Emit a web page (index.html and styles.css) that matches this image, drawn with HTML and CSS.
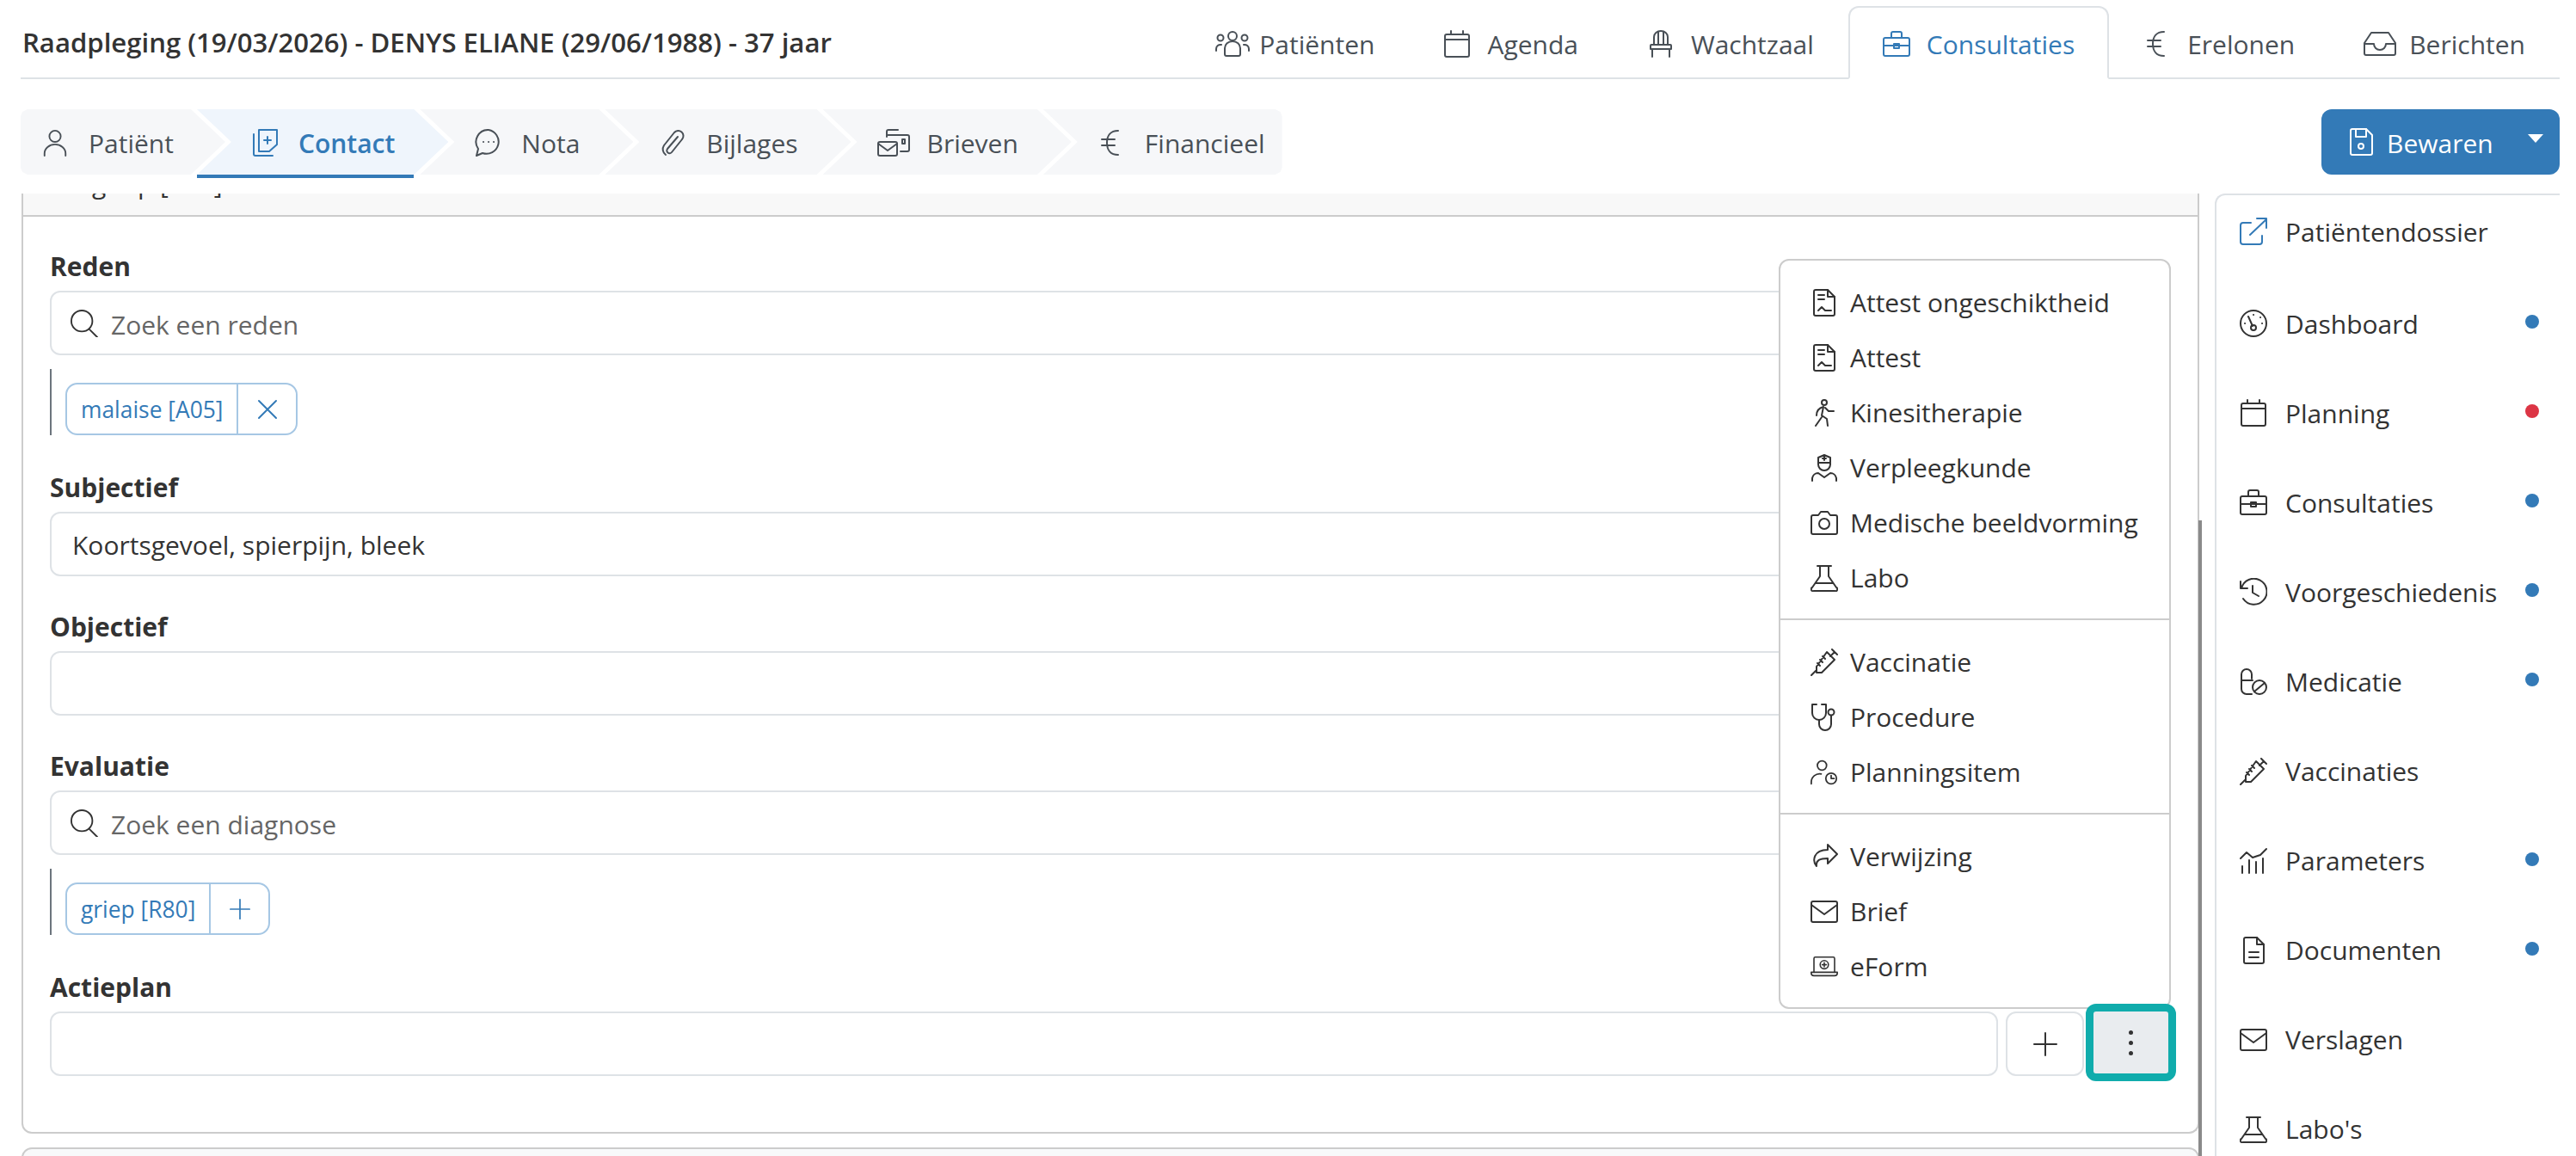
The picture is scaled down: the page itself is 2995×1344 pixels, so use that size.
FILE: index.html
```html
<!DOCTYPE html>
<html lang="nl">
<head>
  <meta charset="UTF-8">
  <title>Raadpleging</title>
  <link rel="stylesheet" href="styles.css">
</head>
<body>
  <!-- icon sprite -->
  <svg class="sprite" xmlns="http://www.w3.org/2000/svg">
    <symbol id="i-user" viewBox="0 0 32 34"><circle cx="16" cy="9" r="7"/><path d="M3 33v-3a13 11 0 0 1 26 0v3"/></symbol>
    <symbol id="i-contact" viewBox="0 0 32 32"><path d="M3 6v23a2 2 0 0 0 2 2h20"/><path d="M9 1h21v17l-9 8H9z"/><path d="M19 9v8M15 13h8"/></symbol>
    <symbol id="i-note" viewBox="0 0 32 32"><path d="M17 1a14 14 0 1 1-7 27l-7 3 2-8A14 14 0 0 1 17 1z"/><path d="M11 15h.1M17 15h.1M23 15h.1"/></symbol>
    <symbol id="i-clip" viewBox="0 0 32 32"><path d="M22 9L10 23a3 3 0 0 0 5 4L27 12a6 6 0 0 0-9-8L6 19a8 8 0 0 0 2 11"/></symbol>
    <symbol id="i-letters" viewBox="0 0 38 32"><path d="M11 9V3a2 2 0 0 1 2-2h11M11 7h24a2 2 0 0 1 2 2v15a2 2 0 0 1-2 2h-8"/><rect x="1" y="15" width="22" height="16" rx="2"/><path d="M1 17l11 8 11-8"/><rect x="29" y="12" width="3" height="5"/></symbol>
    <symbol id="i-euro" viewBox="0 0 32 32"><path d="M24 2c-9 0-13 6-13 14s4 14 13 14M5 12h15M5 19h15"/></symbol>
    <symbol id="i-people" viewBox="0 0 40 30"><circle cx="20" cy="6" r="5"/><circle cx="6" cy="8" r="3.5"/><circle cx="34" cy="8" r="3.5"/><path d="M11 27v-7a9 8 0 0 1 18 0v7a2 2 0 0 1-2 2H13a2 2 0 0 1-2-2z"/><path d="M1 23v-2a5 5 0 0 1 6-5M39 23v-2a5 5 0 0 0-6-5"/></symbol>
    <symbol id="i-calendar" viewBox="0 0 32 32"><rect x="2" y="5" width="28" height="26" rx="2"/><path d="M2 11h28M9 1v4M23 1v4"/></symbol>
    <symbol id="i-chair" viewBox="0 0 32 32"><path d="M8 17V8a8 7 0 0 1 16 0v9M13 17V2M19 17V2"/><path d="M5 17h22a1 1 0 0 1 1 1v4H4v-4a1 1 0 0 1 1-1zM6 22v9M26 22v9"/></symbol>
    <symbol id="i-case" viewBox="0 0 32 32"><rect x="1" y="9" width="30" height="21" rx="2"/><path d="M10 9V4a2 2 0 0 1 2-2h8a2 2 0 0 1 2 2v5M1 18h30"/><rect x="13" y="16" width="6" height="5"/></symbol>
    <symbol id="i-inbox" viewBox="0 0 38 32"><path d="M9 3h20l8 12v12a2 2 0 0 1-2 2H3a2 2 0 0 1-2-2V15zM1 16h11a7 7 0 0 0 14 0h11"/></symbol>
    <symbol id="i-save" viewBox="0 0 32 32"><path d="M6 1h16l7 7v21a2 2 0 0 1-2 2H6a2 2 0 0 1-2-2V3a2 2 0 0 1 2-2z"/><path d="M10 1v9h12V1"/><circle cx="16" cy="21" r="3"/></symbol>
    <symbol id="i-open" viewBox="0 0 32 32"><path d="M13 6H4a3 3 0 0 0-3 3v19a3 3 0 0 0 3 3h19a3 3 0 0 0 3-3v-7"/><path d="M12 20L31 2M20 1h11v11"/></symbol>
    <symbol id="i-gauge" viewBox="0 0 32 32"><circle cx="16" cy="16" r="15"/><path d="M10 8l5 11"/><circle cx="16" cy="21" r="3"/><path d="M16 6h.1M24 9h.1M26 16h.1M6 16h.1"/></symbol>
    <symbol id="i-history" viewBox="0 0 32 32"><path d="M1 4v8h8"/><path d="M2 12A15 15 0 1 1 4 24"/><path d="M15 9v8l7 4"/></symbol>
    <symbol id="i-pills" viewBox="0 0 32 32"><path d="M14 13V8A6 6 0 0 0 2 8v17a6 6 0 0 0 6 6h6M2 15h13"/><circle cx="23" cy="23" r="8"/><path d="M17 28l12-10"/></symbol>
    <symbol id="i-syringe" viewBox="0 0 32 32"><path d="M25 1l6 6M28 4l-5 5M19 4l9 9-15 15H7v-7zM1 31l6-6M14 9l3 3M11 13l3 3M8 17l3 3"/></symbol>
    <symbol id="i-chart" viewBox="0 0 32 32"><path d="M1 13l7-7 7 6 9-3 7-7M3 30v-8M11 30V15M19 30V17M27 30V13"/></symbol>
    <symbol id="i-doc" viewBox="0 0 32 32"><path d="M7 1h13l8 8v20a2 2 0 0 1-2 2H7a2 2 0 0 1-2-2V3a2 2 0 0 1 2-2z"/><path d="M20 1v8h8M11 18h11M11 24h11"/></symbol>
    <symbol id="i-mail" viewBox="0 0 32 32"><rect x="1" y="4" width="30" height="24" rx="2"/><path d="M1 8l15 11L31 8"/></symbol>
    <symbol id="i-flask" viewBox="0 0 32 32"><path d="M8 2h16M11 2v12L2 27a2 2 0 0 0 2 4h24a2 2 0 0 0 2-4l-9-13V2M6 22h20"/></symbol>
    <symbol id="i-attest" viewBox="0 0 32 32"><path d="M6 1h14l8 8v20a2 2 0 0 1-2 2H6a2 2 0 0 1-2-2V3a2 2 0 0 1 2-2z"/><path d="M20 1v8h8M9 7h7M9 12h7M9 25l4-4 4 4h7"/></symbol>
    <symbol id="i-walk" viewBox="0 0 32 32"><circle cx="16" cy="4" r="3"/><path d="M15 9c-4 1-8 4-8 10M15 9l-2 10 6 4 1 8M17 10l4 4h6M13 21L6 31"/></symbol>
    <symbol id="i-nurse" viewBox="0 0 32 32"><path d="M9 4l7-3 7 3v6H9zM9 10v2a7 7 0 0 0 14 0v-2M16 3v4M14 5h4"/><path d="M2 31v-3a7 7 0 0 1 7-6l7 5 7-5a7 7 0 0 1 7 6v3"/></symbol>
    <symbol id="i-camera" viewBox="0 0 32 32"><path d="M3 7h6l3-4h8l3 4h6a2 2 0 0 1 2 2v18a2 2 0 0 1-2 2H3a2 2 0 0 1-2-2V9a2 2 0 0 1 2-2z"/><circle cx="16" cy="17" r="6"/></symbol>
    <symbol id="i-steth" viewBox="0 0 32 32"><path d="M7 1H2v10a8 8 0 0 0 16 0V1h-5"/><path d="M10 19v5a7 7 0 0 0 14 0V14"/><circle cx="24" cy="10" r="3.5"/></symbol>
    <symbol id="i-userclock" viewBox="0 0 36 32"><circle cx="15" cy="7" r="6"/><path d="M1 31v-2a11 11 0 0 1 13-11"/><circle cx="27" cy="24" r="7"/><path d="M27 20v4h4"/></symbol>
    <symbol id="i-forward" viewBox="0 0 32 32"><path d="M20 2l11 11-11 11v-6C11 18 6 20 7 27 2 21 3 8 20 8z"/></symbol>
    <symbol id="i-laptop" viewBox="0 0 40 32"><path d="M5 24V4a2 2 0 0 1 2-2h26a2 2 0 0 1 2 2v20"/><path d="M1 24h38v1a4 4 0 0 1-4 4H5a4 4 0 0 1-4-4z"/><circle cx="20" cy="13" r="6"/><path d="M20 10v6M17 13h6"/></symbol>
    <symbol id="i-search" viewBox="0 0 34 34"><circle cx="14" cy="14" r="13"/><path d="M23 24l10 10"/></symbol>
    <symbol id="i-close" viewBox="0 0 24 24"><path d="M2 2l20 20M22 2L2 22"/></symbol>
    <symbol id="i-plus" viewBox="0 0 28 28"><path d="M14 1v26M1 14h26"/></symbol>
  </svg>

  <div class="app">
    <!-- Top bar -->
    <header class="topbar">
      <div class="title">Raadpleging (19/03/2026) - DENYS ELIANE (29/06/1988) - 37 jaar</div>
      <nav class="tabs">
        <a class="tab"><svg class="ic ic-40"><use href="#i-people"/></svg>Patiënten</a>
        <a class="tab"><svg class="ic"><use href="#i-calendar"/></svg>Agenda</a>
        <a class="tab"><svg class="ic"><use href="#i-chair"/></svg>Wachtzaal</a>
        <a class="tab active"><svg class="ic"><use href="#i-case"/></svg>Consultaties</a>
        <a class="tab"><svg class="ic"><use href="#i-euro"/></svg>Erelonen</a>
        <a class="tab"><svg class="ic ic-38"><use href="#i-inbox"/></svg>Berichten</a>
      </nav>
    </header>

    <!-- Stepper + save -->
    <div class="toolbar">
      <div class="steps">
        <a class="step"><svg class="ic"><use href="#i-user"/></svg>Patiënt</a>
        <a class="step active"><svg class="ic"><use href="#i-contact"/></svg>Contact</a>
        <a class="step"><svg class="ic"><use href="#i-note"/></svg>Nota</a>
        <a class="step"><svg class="ic"><use href="#i-clip"/></svg>Bijlages</a>
        <a class="step"><svg class="ic ic-38"><use href="#i-letters"/></svg>Brieven</a>
        <a class="step"><svg class="ic"><use href="#i-euro"/></svg>Financieel</a>
      </div>
      <button class="save-btn">
        <svg class="ic"><use href="#i-save"/></svg>
        <span>Bewaren</span>
        <i class="caret"></i>
      </button>
    </div>

    <div class="main">
      <div class="content">
        <div class="card">
          <div class="strip"><div class="strip-text">griep [R80]</div></div>
          <div class="card-body">
            <div class="field with-tags">
              <label>Reden</label>
              <div class="search">
                <svg class="ic"><use href="#i-search"/></svg>
                <input type="text" placeholder="Zoek een reden">
              </div>
              <div class="tags">
                <span class="chip"><span class="chip-text">malaise [A05]</span><span class="chip-btn"><svg class="ic ic-s"><use href="#i-close"/></svg></span></span>
              </div>
            </div>
            <div class="field">
              <label>Subjectief</label>
              <input class="text-input" type="text" value="Koortsgevoel, spierpijn, bleek">
            </div>
            <div class="field">
              <label>Objectief</label>
              <input class="text-input" type="text">
            </div>
            <div class="field with-tags">
              <label>Evaluatie</label>
              <div class="search">
                <svg class="ic"><use href="#i-search"/></svg>
                <input type="text" placeholder="Zoek een diagnose">
              </div>
              <div class="tags">
                <span class="chip"><span class="chip-text">griep [R80]</span><span class="chip-btn"><svg class="ic ic-s"><use href="#i-plus"/></svg></span></span>
              </div>
            </div>
            <div class="field">
              <label>Actieplan</label>
              <div class="action-row">
                <input class="text-input" type="text">
                <button class="plus-btn"><svg class="ic ic-m"><use href="#i-plus"/></svg></button>
                <button class="more-btn"><i></i><i></i><i></i></button>
              </div>
            </div>
          </div>
        </div>
        <div class="card next"></div>
        <div class="scrollbar"></div>

        <!-- Dropdown of the ⋮ button -->
        <div class="menu">
          <div class="menu-group">
            <a class="menu-item"><svg class="ic"><use href="#i-attest"/></svg>Attest ongeschiktheid</a>
            <a class="menu-item"><svg class="ic"><use href="#i-attest"/></svg>Attest</a>
            <a class="menu-item"><svg class="ic"><use href="#i-walk"/></svg>Kinesitherapie</a>
            <a class="menu-item"><svg class="ic"><use href="#i-nurse"/></svg>Verpleegkunde</a>
            <a class="menu-item"><svg class="ic"><use href="#i-camera"/></svg>Medische beeldvorming</a>
            <a class="menu-item"><svg class="ic"><use href="#i-flask"/></svg>Labo</a>
          </div>
          <div class="menu-group">
            <a class="menu-item"><svg class="ic"><use href="#i-syringe"/></svg>Vaccinatie</a>
            <a class="menu-item"><svg class="ic"><use href="#i-steth"/></svg>Procedure</a>
            <a class="menu-item"><svg class="ic"><use href="#i-userclock"/></svg>Planningsitem</a>
          </div>
          <div class="menu-group">
            <a class="menu-item"><svg class="ic"><use href="#i-forward"/></svg>Verwijzing</a>
            <a class="menu-item"><svg class="ic"><use href="#i-mail"/></svg>Brief</a>
            <a class="menu-item"><svg class="ic"><use href="#i-laptop"/></svg>eForm</a>
          </div>
        </div>
      </div>

      <!-- Right side list -->
      <aside class="side">
        <a class="side-row first"><svg class="ic link"><use href="#i-open"/></svg><span>Patiëntendossier</span></a>
        <a class="side-row"><svg class="ic"><use href="#i-gauge"/></svg><span>Dashboard</span><i class="dot"></i></a>
        <a class="side-row"><svg class="ic"><use href="#i-calendar"/></svg><span>Planning</span><i class="dot red"></i></a>
        <a class="side-row"><svg class="ic"><use href="#i-case"/></svg><span>Consultaties</span><i class="dot"></i></a>
        <a class="side-row"><svg class="ic"><use href="#i-history"/></svg><span>Voorgeschiedenis</span><i class="dot"></i></a>
        <a class="side-row"><svg class="ic"><use href="#i-pills"/></svg><span>Medicatie</span><i class="dot"></i></a>
        <a class="side-row"><svg class="ic"><use href="#i-syringe"/></svg><span>Vaccinaties</span></a>
        <a class="side-row"><svg class="ic"><use href="#i-chart"/></svg><span>Parameters</span><i class="dot"></i></a>
        <a class="side-row"><svg class="ic"><use href="#i-doc"/></svg><span>Documenten</span><i class="dot"></i></a>
        <a class="side-row"><svg class="ic"><use href="#i-mail"/></svg><span>Verslagen</span></a>
        <a class="side-row"><svg class="ic"><use href="#i-flask"/></svg><span>Labo's</span></a>
      </aside>
    </div>
  </div>
</body>
</html>
```

FILE: styles.css
```css
* {
  box-sizing: border-box;
}

html, body {
  height: 100%;
  margin: 0;
  overflow: hidden;
}

body {
  font-family: 'Open Sans', 'Noto Sans', sans-serif;
  font-size: 30px;
  color: #333;
  background-color: #fff;
}

.sprite {
  display: none;
}

/* Icons */
.ic {
  width: 32px;
  height: 32px;
  flex: none;
  fill: none;
  stroke: currentColor;
  stroke-width: 2;
  stroke-linecap: round;
  stroke-linejoin: round;
}

.ic-40 { width: 40px; }
.ic-38 { width: 38px; }
.ic-m { width: 28px; height: 28px; }
.ic-s { width: 24px; height: 24px; }

.app {
  display: flex;
  flex-direction: column;
  height: 100%;
  padding: 0 19px 0 24px;
}

/* Top bar */
.topbar {
  display: flex;
  align-items: flex-end;
  justify-content: space-between;
  height: 92px;
  border-bottom: 2px solid #dee2e6;
}

.title {
  align-self: center;
  margin: 8px 0 0 2px;
  font-size: 31.1px;
  font-weight: 600;
}

.tabs {
  display: flex;
  margin-bottom: -2px;
}

.tab {
  display: flex;
  align-items: center;
  gap: 19px;
  height: 85px;
  padding: 3px 38px 0;
  color: #495057;
  border: 2px solid transparent;
  border-radius: 12px 12px 0 0;
}

.tab .ic-38 {
  margin-right: -4px;
}

.tab .ic-40 {
  margin-right: -8px;
}

.tab.active {
  color: #337ab7;
  border-color: #dee2e6;
  border-bottom-color: #fff;
  background-color: #fff;
}

/* Stepper */
.toolbar {
  display: flex;
  align-items: flex-start;
  justify-content: space-between;
  margin-top: 35px;
  height: 98px;
}

.steps {
  display: flex;
}

.step {
  position: relative;
  display: flex;
  align-items: center;
  gap: 23px;
  height: 76px;
  margin-left: -33px;
  padding: 2px 62px 0 63px;
  color: #495057;
}

.step .ic-38 {
  margin-right: -3px;
}

.step::before {
  content: "";
  position: absolute;
  inset: 0;
  z-index: -1;
  background-color: #f6f7f9;
  clip-path: polygon(0 0, calc(100% - 40px) 0, 100% 50%, calc(100% - 40px) 100%, 0 100%, 40px 50%);
}

.step:first-child {
  margin-left: 0;
  padding-left: 24px;
  padding-right: 60px;
}

.step:first-child::before {
  clip-path: polygon(0 8px, 2px 3px, 8px 0, calc(100% - 40px) 0, 100% 50%, calc(100% - 40px) 100%, 8px 100%, 2px calc(100% - 3px), 0 calc(100% - 8px));
}

.step:last-child {
  padding-right: 20px;
}

.step:last-child::before {
  clip-path: polygon(0 0, calc(100% - 8px) 0, calc(100% - 2px) 3px, 100% 8px, 100% calc(100% - 8px), calc(100% - 2px) calc(100% - 3px), calc(100% - 8px) 100%, 0 100%, 40px 50%);
}

.step.active {
  color: #337ab7;
  font-weight: 600;
}

.step.active::before {
  background-color: #eff5fc;
}

.step.active::after {
  content: "";
  position: absolute;
  left: 0;
  right: 40px;
  bottom: -4px;
  height: 4px;
  background-color: #337ab7;
}

.save-btn {
  display: flex;
  align-items: center;
  width: 277px;
  height: 76px;
  padding: 0 0 0 30px;
  color: #fff;
  font: inherit;
  background-color: #337ab7;
  border: none;
  border-radius: 12px;
}

.save-btn span {
  margin: 2px 0 0 14px;
}

.caret {
  margin-left: 40px;
  margin-bottom: 8px;
  border-left: 9px solid transparent;
  border-right: 9px solid transparent;
  border-top: 10px solid #fff;
}

/* Main area */
.main {
  flex: 1;
  display: flex;
  min-height: 0;
  gap: 15px;
}

.content {
  position: relative;
  flex: 1;
  overflow: hidden;
}

.card {
  margin: 0 3px 0 1px;
  height: 1093px;
  border: 2px solid #ccc;
  border-top: none;
  border-radius: 0 0 12px 12px;
}

.card.next {
  height: 60px;
  margin-top: 16px;
  border-top: 2px solid #ccc;
  border-radius: 12px 12px 0 0;
  background-color: #f8f9fa;
}

.strip {
  height: 27px;
  overflow: hidden;
  padding-left: 80px;
  background-color: #f8f8f8;
  border-bottom: 2px solid #ccc;
}

.strip-text {
  margin-top: -31px;
  line-height: 40px;
}

.card-body {
  padding: 38px 31px 0;
}

.field {
  margin-bottom: 39px;
}

.field.with-tags {
  margin-bottom: 41px;
}

.field label {
  display: block;
  height: 40px;
  margin-bottom: 8px;
  line-height: 40px;
  font-weight: 700;
}

.search, .text-input {
  width: 100%;
  height: 75px;
  border: 2px solid #dee2e6;
  border-radius: 12px;
  background-color: #fff;
}

.search {
  display: flex;
  align-items: center;
  gap: 15px;
  padding-left: 22px;
}

input {
  font: inherit;
  color: #333;
  outline: none;
}

.search input {
  flex: 1;
  border: none;
  padding: 4px 0 0;
}

input::placeholder {
  color: #666;
  opacity: 1;
}

.text-input {
  display: block;
  padding: 2px 24px 0;
}

.tags {
  display: flex;
  align-items: flex-end;
  height: 77px;
  margin-top: 16px;
  padding-left: 16px;
  border-left: 2px solid #6c757d;
}

.chip {
  display: flex;
  height: 61px;
  color: #337ab7;
  font-size: 26.4px;
  border: 2px solid #a6c7e4;
  border-radius: 14px;
}

.chip-text {
  display: flex;
  align-items: center;
  padding: 0 16px;
}

.chip-btn {
  display: flex;
  align-items: center;
  justify-content: center;
  width: 69px;
  border-left: 2px solid #a6c7e4;
}

.action-row {
  display: flex;
  align-items: flex-start;
}

.action-row .text-input {
  flex: 1;
}

.plus-btn {
  display: flex;
  align-items: center;
  justify-content: center;
  width: 91px;
  height: 75px;
  margin-left: 9px;
  color: #333;
  background-color: #fff;
  border: 2px solid #dee2e6;
  border-radius: 12px;
}

/* teal outline marks the opened button */
.more-btn {
  position: relative;
  z-index: 3;
  display: flex;
  flex-direction: column;
  align-items: center;
  justify-content: center;
  gap: 7px;
  width: 87px;
  height: 72px;
  margin: 0 3px 0 11px;
  background-color: #e9ecef;
  border: none;
  border-radius: 3px;
  outline: 9px solid #10acac;
}

.more-btn i {
  width: 5px;
  height: 5px;
  border-radius: 50%;
  background-color: #333;
}

.scrollbar {
  position: absolute;
  top: 380px;
  right: 0;
  bottom: 0;
  width: 4px;
  background-color: #8a8a8a;
}

/* Dropdown */
.menu {
  position: absolute;
  z-index: 2;
  left: 2044px;
  top: 76px;
  width: 456px;
  background-color: #fff;
  border: 2px solid #ccc;
  border-radius: 12px;
}

.menu-group {
  padding: 18px 0 14px;
  border-bottom: 2px solid #ccc;
}

.menu-group:last-child {
  border-bottom: none;
}

.menu-item {
  display: flex;
  align-items: center;
  gap: 14px;
  height: 64px;
  padding: 0 0 3px 35px;
}

/* Side list */
.side {
  width: 401px;
  flex: none;
  overflow: hidden;
  padding-right: 24px;
  border-top: 2px solid #dee2e6;
  border-left: 2px solid #dee2e6;
  border-top-left-radius: 12px;
}

.side-row {
  display: flex;
  align-items: center;
  gap: 21px;
  height: 104.1px;
  padding-left: 27px;
}

.side-row.first {
  height: 84px;
  margin-bottom: 13px;
}

.side-row span {
  flex: 1;
}

.link {
  color: #337ab7;
}

.dot {
  flex: none;
  width: 16px;
  height: 16px;
  margin-bottom: 4px;
  border-radius: 50%;
  background-color: #337ab7;
}

.dot.red {
  background-color: #dc3545;
}
```
